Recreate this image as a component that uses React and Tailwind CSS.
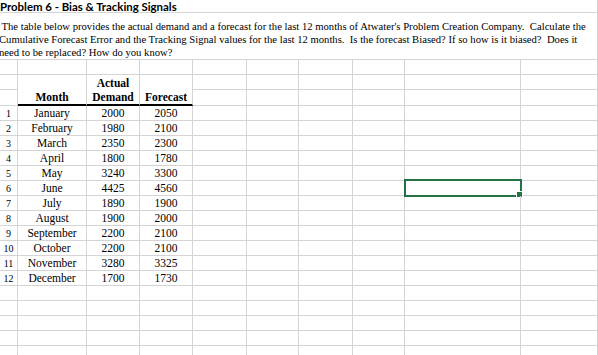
import React from "react";

const serif = { fontFamily: '"Liberation Serif", Georgia, serif' };
const sans = { fontFamily: 'Lato, "Liberation Sans", sans-serif' };

const data = [
  ["January", "2000", "2050"],
  ["February", "1980", "2100"],
  ["March", "2350", "2300"],
  ["April", "1800", "1780"],
  ["May", "3240", "3300"],
  ["June", "4425", "4560"],
  ["July", "1890", "1900"],
  ["August", "1900", "2000"],
  ["September", "2200", "2100"],
  ["October", "2200", "2100"],
  ["November", "3280", "3325"],
  ["December", "1700", "1730"],
];

const cell = "border-r border-b border-[#d4d4d4]";

function Blank({ h = "h-[15px]", extra = "" }) {
  return <div className={`${cell} ${h} ${extra}`} />;
}

function RestCols({ h = "h-[15px]", selected = false }) {
  return (
    <>
      <Blank h={h} />
      <Blank h={h} />
      <Blank h={h} />
      <Blank h={h} />
      <div className={`${cell} ${h} relative`}>
        {selected && (
          <>
            <div className="absolute left-[-1px] top-[-2px] w-[118px] h-[18px] border-2 border-[#217346]" />
            <div className="absolute left-[111px] top-[10px] w-[7px] h-[7px] bg-[#217346] border border-white" />
          </>
        )}
      </div>
      <Blank h={h} />
    </>
  );
}

export default function App() {
  return (
    <div className="w-[598px] h-[355px] overflow-hidden bg-white text-black">
      <div className="grid grid-cols-[18px_69px_53px_53px_54px_52px_54px_52px_116px_77px]">
        {/* title */}
        <div
          className="col-span-10 h-[13px] border-r border-b border-[#d4d4d4] text-[11.4px] leading-[13px] font-bold whitespace-nowrap"
          style={sans}
        >
          Problem 6 - Bias &amp; Tracking Signals
        </div>
        {/* paragraph */}
        <div
          className="col-span-10 h-[47px] border-r border-b border-[#d4d4d4] text-[10.65px] leading-[13px] whitespace-pre pt-[7px] ml-[-1px] overflow-hidden"
          style={serif}
        >
          <div>{" The table below provides the actual demand and a forecast for the last 12 months of Atwater's Problem Creation Company.  Calculate the"}</div>
          <div>{"Cumulative Forecast Error and the Tracking Signal values for the last 12 months.  Is the forecast Biased? If so how is it biased?  Does it"}</div>
          <div>{"need to be replaced? How do you know?"}</div>
        </div>

        {/* blank row */}
        <Blank />
        <Blank />
        <Blank />
        <Blank />
        <RestCols />

        {/* header row 1 */}
        <Blank />
        <div className="h-[15px] border-r border-[#d4d4d4]" />
        <div
          className="h-[15px] border-r border-[#d4d4d4] flex items-end justify-center text-[11.5px] leading-[13px] font-bold"
          style={serif}
        >
          Actual
        </div>
        <div className="h-[15px] border-r border-[#d4d4d4]" />
        <RestCols />

        {/* header row 2 */}
        <Blank h="h-[16px]" />
        {["Month", "Demand", "Forecast"].map((t) => (
          <div
            key={t}
            className="h-[16px] border-r border-r-[#d4d4d4] border-b-2 border-b-black flex items-end justify-center text-[11.5px] leading-[13px] font-bold"
            style={serif}
          >
            {t}
          </div>
        ))}
        <RestCols h="h-[16px]" />

        {/* data rows */}
        {data.map((r, i) => (
          <React.Fragment key={r[0]}>
            <div
              className={`${cell} h-[15px] flex items-end justify-center text-[10px] leading-[13px]`}
              style={serif}
            >
              {i + 1}
            </div>
            {r.map((v, j) => (
              <div
                key={j}
                className={`${cell} h-[15px] flex items-end justify-center text-[11.5px] leading-[13px] whitespace-nowrap`}
                style={serif}
              >
                {v}
              </div>
            ))}
            <RestCols selected={i === 5} />
          </React.Fragment>
        ))}

        {/* trailing blank rows */}
        {[0, 1, 2, 3, 4].map((k) => (
          <React.Fragment key={k}>
            <Blank />
            <Blank />
            <Blank />
            <Blank />
            <RestCols />
          </React.Fragment>
        ))}
      </div>
    </div>
  );
}
